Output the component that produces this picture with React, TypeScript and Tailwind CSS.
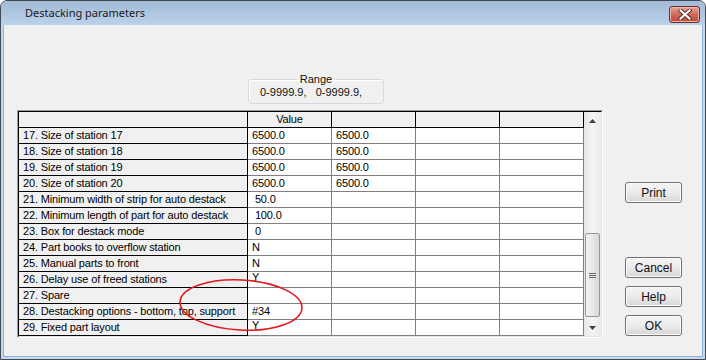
import React from "react";

const rows: { label: string; v1: string; v2: string; up?: boolean }[] = [
  { label: "17. Size of station 17", v1: "6500.0", v2: "6500.0" },
  { label: "18. Size of station 18", v1: "6500.0", v2: "6500.0" },
  { label: "19. Size of station 19", v1: "6500.0", v2: "6500.0" },
  { label: "20. Size of station 20", v1: "6500.0", v2: "6500.0" },
  { label: "21. Minimum width of strip for auto destack", v1: "\u00a050.0", v2: "" },
  { label: "22. Minimum length of part for auto destack", v1: "\u00a0100.0", v2: "" },
  { label: "23. Box for destack mode", v1: "\u00a00", v2: "" },
  { label: "24. Part books to overflow station", v1: "N", v2: "" },
  { label: "25. Manual parts to front", v1: "N", v2: "" },
  { label: "26. Delay use of freed stations", v1: "Y", v2: "", up: true },
  { label: "27. Spare", v1: "", v2: "" },
  { label: "28. Destacking options - bottom, top, support", v1: "#34", v2: "" },
  { label: "29. Fixed part layout", v1: "Y", v2: "", up: true },
];

function Btn({ children }: { children: React.ReactNode }) {
  return (
    <div className="w-[57px] h-[21px] rounded-[3px] border border-[#707070] bg-gradient-to-b from-[#f4f4f4] via-[#ebebeb] to-[#d6d6d6] flex items-center justify-center text-[12px] text-[#111] shadow-[inset_0_0_0_1px_#fcfcfc]">
      {children}
    </div>
  );
}

export default function App() {
  const font = { fontFamily: '"Liberation Sans", Arial, sans-serif' };
  return (
    <div className="relative w-[706px] h-[360px] bg-white overflow-hidden" style={font}>
      <div className="w-full h-full rounded-t-[7px] border border-[#3f4a56] bg-[#c5d9ee] flex flex-col overflow-hidden">
        {/* title bar */}
        <div className="h-[24px] shrink-0 bg-gradient-to-b from-[#a2bad6] to-[#bcd2eb] flex items-center pl-[24px] pr-[4px]">
          <span className="text-[11px] text-[#1b1b1b] flex-1" style={{ fontFamily: '"Noto Sans", sans-serif' }}>
            Destacking parameters
          </span>
          <div className="w-[31px] h-[17px] mt-[2px] mr-[1px] rounded-[3px] border border-[#6e2d26] bg-gradient-to-b from-[#e6a596] via-[#cf6a59] to-[#c2473a] flex items-center justify-center shadow-[inset_0_0_0_1px_#ecb3a8]">
            <svg width="14" height="11" viewBox="0 0 14 11">
              <path d="M2.5 1.5 L11.5 9.5 M11.5 1.5 L2.5 9.5" stroke="#5a2a25" strokeWidth="4" strokeLinecap="square" />
              <path d="M2.5 1.5 L11.5 9.5 M11.5 1.5 L2.5 9.5" stroke="#ffffff" strokeWidth="2.2" strokeLinecap="square" />
            </svg>
          </div>
        </div>
        {/* client area */}
        <div className="flex-1 mx-[2px] mb-[2px] border-l border-r border-b border-[#8fb3d6] bg-[#f0f0f0] flex">
          {/* left section */}
          <div className="flex flex-col pl-[13px]">
            <fieldset className="ml-[231px] mt-[47px] w-[136px] h-[32px] border border-[#d5dbe0] rounded-[3px] shadow-[inset_1px_1px_0_#ffffff] px-[11px]">
              <legend className="mx-auto px-[3px] text-[11px] leading-[14px] text-[#111]">Range</legend>
              <div className="text-[11px] leading-[14px] text-[#111] -mt-[1px] whitespace-pre">0-9999.9,   0-9999.9,</div>
            </fieldset>
            {/* grid */}
            <div className="mt-[6px] border-t border-l border-[#a0a0a0] border-r border-b border-r-white border-b-white">
              <div className="border-t border-l border-black border-r border-b border-r-[#e3e3e3] border-b-[#e3e3e3] flex text-[11px] tracking-[-0.15px] text-black">
                <div className="flex flex-col">
                  {/* header */}
                  <div className="flex h-[16px] bg-[#f0f0f0]">
                    <div className="w-[229px] border-r border-b border-black" />
                    <div className="w-[84px] border-r border-b border-black flex items-center justify-center">Value</div>
                    <div className="w-[84px] border-r border-b border-black" />
                    <div className="w-[84px] border-r border-b border-black" />
                    <div className="w-[84px] border-r border-b border-black" />
                  </div>
                  {rows.map((r) => (
                    <div key={r.label} className="flex h-[16px]">
                      <div className="w-[229px] border-r border-b border-black bg-[#f0f0f0] pl-[4px] flex items-center whitespace-nowrap overflow-hidden">
                        {r.label}
                      </div>
                      <div className={`w-[84px] border-r border-b border-[#808080] bg-white pl-[4px] flex whitespace-pre ${r.up ? "items-start leading-[11px]" : "items-center"}`}>
                        {r.v1}
                      </div>
                      <div className="w-[84px] border-r border-b border-[#808080] bg-white pl-[4px] flex items-center">
                        {r.v2}
                      </div>
                      <div className="w-[84px] border-r border-b border-[#808080] bg-white" />
                      <div className="w-[84px] border-r border-b border-[#808080] bg-white" />
                    </div>
                  ))}
                </div>
                {/* scrollbar */}
                <div className="w-[17px] bg-gradient-to-r from-[#e6e6e6] via-[#f4f4f4] to-[#eaeaea] flex flex-col items-center">
                  <div className="h-[17px] flex items-center justify-center">
                    <svg width="7" height="4" viewBox="0 0 7 4">
                      <path d="M0 4 L3.5 0 L7 4 Z" fill="#404040" />
                    </svg>
                  </div>
                  <div className="flex-1 w-full flex flex-col justify-end pb-[17px] px-[1px]">
                    <div className="h-[84px] rounded-[2px] border border-[#979797] bg-gradient-to-r from-[#f2f2f2] via-[#e8e8e8] to-[#d8d8d8] flex flex-col items-center justify-center gap-[1px] mb-[2px]">
                      <div className="w-[7px] h-[1px] bg-[#6a6a6a]" />
                      <div className="w-[7px] h-[1px] bg-[#6a6a6a]" />
                      <div className="w-[7px] h-[1px] bg-[#6a6a6a]" />
                    </div>
                  </div>
                  <div className="h-[17px] -mt-[17px] flex items-center justify-center">
                    <svg width="7" height="4" viewBox="0 0 7 4">
                      <path d="M0 0 L7 0 L3.5 4 Z" fill="#404040" />
                    </svg>
                  </div>
                </div>
              </div>
            </div>
          </div>
          {/* buttons */}
          <div className="flex flex-col pl-[22px] pt-[157px]">
            <Btn>Print</Btn>
            <div className="mt-[54px]">
              <Btn>Cancel</Btn>
            </div>
            <div className="mt-[8px]">
              <Btn>Help</Btn>
            </div>
            <div className="mt-[8px]">
              <Btn>OK</Btn>
            </div>
          </div>
        </div>
      </div>
      {/* red annotation ellipse */}
      <svg className="absolute left-0 top-0 pointer-events-none" width="706" height="360">
        <ellipse cx="241" cy="305" rx="61" ry="25" fill="none" stroke="#e3161c" strokeWidth="1.6" transform="rotate(3 241 305)" />
      </svg>
    </div>
  );
}
